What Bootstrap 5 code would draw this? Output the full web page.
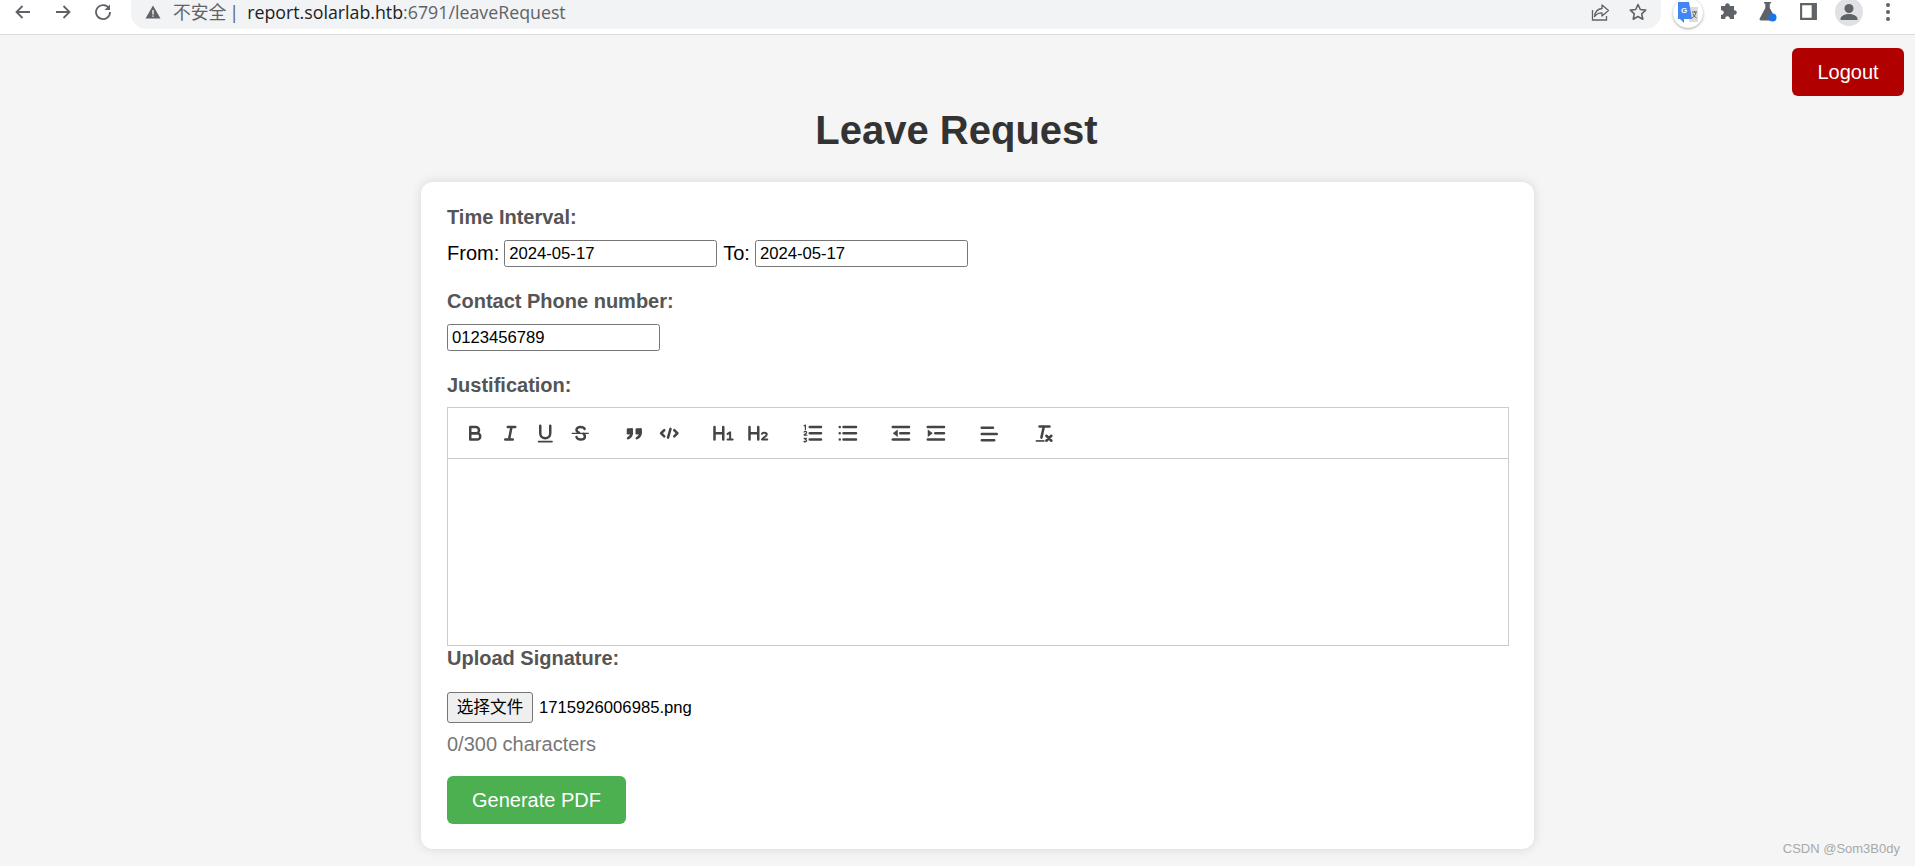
<!DOCTYPE html>
<html lang="en">
<head>
  <meta charset="UTF-8">
  <meta name="viewport" content="width=device-width, initial-scale=1.0">
  <title>Leave Request</title>
  <link href="https://cdn.jsdelivr.net/npm/bootstrap@5.3.0/dist/css/bootstrap.min.css" rel="stylesheet">
  <style>
    body {
      background: #f5f5f5;
      font-family: "Liberation Sans", "Noto Sans CJK SC", sans-serif;
      font-size: 20px;
      color: #000;
      height: 866px;
      overflow: hidden;
      position: relative;
    }
    .chrome-bar {
      height: 35px;
      background: #fff;
      border-bottom: 1px solid #dadce0;
      padding-left: 3px;
      overflow: hidden;
    }
    .chrome-btn {
      width: 40px;
      height: 23px;
      flex: none;
    }
    .btn-profile { width: 41px; }
    .btn-dots { width: 38px; }
    .omnibox {
      width: 1530px;
      height: 29px;
      margin-left: 8px;
      margin-right: 12px;
      background: #f1f3f4;
      border-radius: 0 0 15px 15px;
      padding: 0 13px 5px 14px;
      font-family: "Open Sans", "Noto Sans CJK SC", sans-serif;
      font-size: 17.8px;
      line-height: 24px;
      white-space: nowrap;
      flex: none;
    }
    .omni-warn { color: #5f6368; }
    .omni-sep { color: #5f6368; margin: 0 8px 0 3px; }
    .omni-host { color: #202124; }
    .omni-path { color: #5f6368; }
    .omni-end { margin-left: auto; gap: 18px; }
    .translate-chip {
      width: 30px;
      height: 30px;
      border-radius: 50%;
      background: #fff;
      box-shadow: 0 1px 3px rgba(0,0,0,.35);
      margin-top: -2px;
      margin-right: 5px;
      flex: none;
    }
    .tool-icon { flex: none; }
    .warn-icon { margin-right: 12px; }
    .logout-row {
      padding: 13px 11px 0 0;
    }
    .logout-btn {
      width: 112px;
      height: 48px;
      background: #b00000;
      color: #fff;
      font-size: 20px;
      border: 0;
      border-radius: 6px;
      padding: 0;
    }
    .page-title {
      font-family: "Liberation Sans", sans-serif;
      font-size: 40px;
      font-weight: 700;
      line-height: 46px;
      color: #333;
      margin: 11px 0 29px;
      padding-right: 2px;
    }
    .form-box {
      width: 1113px;
      height: 667px;
      margin-left: 421px;
      background: #fff;
      border-radius: 12px;
      box-shadow: 0 0 12px rgba(0,0,0,.12);
      padding: 23px 26px 25px;
    }
    .field-name {
      display: block;
      font-weight: 700;
      color: #555;
      line-height: 24px;
      margin-bottom: 0;
    }
    .field-row {
      height: 27px;
      line-height: 26px;
      margin: 11px 0 22px;
    }
    .plain-input {
      width: 213px;
      height: 27px;
      border: 1px solid #767676;
      border-radius: 2.5px;
      padding: 1px 4px;
      font-size: 16.67px;
      color: #000;
      vertical-align: top;
    }
    .to-label { margin: 0 5px 0 6px; }
    .from-label { margin-right: 5px; }
    .editor-wrap {
      margin-top: 10px;
      width: 1062px;
      height: 239px;
      border: 1px solid #ccc;
    }
    .editor-tools {
      height: 51px;
      padding: 10px;
      border-bottom: 1px solid #ccc;
    }
    .tool-group { margin-right: 18.75px; }
    .tool-btn {
      width: 35px;
      height: 30px;
      padding: 4px 6px;
      border: 0;
      background: none;
      line-height: 0;
    }
    .tool-btn svg {
      width: 22.5px;
      height: 22.5px;
    }
    .ql-line {
      fill: none;
      stroke: #444;
      stroke-width: 2;
      stroke-linecap: round;
      stroke-linejoin: round;
    }
    .ql-thin {
      fill: none;
      stroke: #444;
      stroke-width: 1.6;
      stroke-linecap: round;
      stroke-linejoin: round;
    }
    .ql-tiny {
      fill: none;
      stroke: #444;
      stroke-width: 1;
      stroke-linecap: round;
      stroke-linejoin: round;
    }
    .ql-fill { fill: #444; }
    .editor-text { height: 187px; }
    .file-row {
      margin-top: 22px;
      height: 31px;
      gap: 6px;
    }
    .file-btn {
      width: 86px;
      height: 31px;
      background: #efefef;
      border: 1px solid #767676;
      border-radius: 3px;
      font-size: 16.67px;
      padding: 0;
      color: #000;
    }
    .file-name { font-size: 16.67px; }
    .char-count {
      color: #777;
      line-height: 24px;
      margin-top: 9px;
    }
    .generate-btn {
      display: block;
      width: 179px;
      height: 48px;
      margin-top: 20px;
      background: #4caf50;
      color: #fff;
      font-size: 20px;
      border: 0;
      border-radius: 6px;
      padding: 0;
    }
    .mark-csdn {
      position: absolute;
      right: 15px;
      bottom: 9px;
      font-size: 13px;
      line-height: 16px;
      color: #a9a9a9;
    }
  </style>
</head>
<body>
  <div class="chrome-bar d-flex align-items-start">
    <div class="chrome-btn d-flex align-items-center justify-content-center">
      <svg width="20" height="20" viewBox="0 0 20 20"><path d="M17 10H4M9.5 4 3.5 10l6 6" fill="none" stroke="#5f6368" stroke-width="1.8"/></svg>
    </div>
    <div class="chrome-btn d-flex align-items-center justify-content-center">
      <svg width="20" height="20" viewBox="0 0 20 20"><path d="M3 10h13M10.5 4l6 6-6 6" fill="none" stroke="#5f6368" stroke-width="1.8"/></svg>
    </div>
    <div class="chrome-btn d-flex align-items-center justify-content-center">
      <svg width="20" height="20" viewBox="0 0 20 20"><path d="M16 6.5A7 7 0 1 0 17 10" fill="none" stroke="#5f6368" stroke-width="1.8"/><path d="M17 2.5V8h-5.5z" fill="#5f6368"/></svg>
    </div>
    <div class="omnibox d-flex align-items-center">
      <svg class="tool-icon warn-icon" width="16" height="16" viewBox="0 0 16 16"><path d="M8 1.5 15.500 14.500H.5z" fill="#5f6368"/><path d="M7.300 6h1.400v4.600H7.300zM7.300 11.400h1.400v1.400H7.300z" fill="#f1f3f4"/></svg>
      <span class="omni-warn">不安全</span><span class="omni-sep">|</span><span class="omni-host">report.solarlab.htb</span><span class="omni-path">:6791/leaveRequest</span>
      <div class="omni-end d-flex align-items-center">
        <svg class="tool-icon" width="20" height="20" viewBox="0 0 20 20"><path d="M2.500 8v10h14v-4" fill="none" stroke="#5f6368" stroke-width="1.300"/><path d="M12 3l6.500 5.500L12 14v-3.200c-3.500 0-5.500 1-7.500 3.700.5-4.500 3-7.500 7.500-8z" fill="none" stroke="#5f6368" stroke-width="1.300" stroke-linejoin="round"/></svg>
        <svg class="tool-icon" width="20" height="20" viewBox="0 0 20 20"><path d="M10 2.500l2.300 5 5.400.6-4 3.700 1.100 5.400-4.800-2.700-4.800 2.700 1.100-5.400-4-3.700 5.400-.6z" fill="none" stroke="#5f6368" stroke-width="1.600" stroke-linejoin="round"/></svg>
      </div>
    </div>
    <div class="translate-chip d-flex align-items-center justify-content-center">
      <svg width="22" height="22" viewBox="0 0 22 22"><path d="M13 5h8v15h-9z" fill="#dadce0"/><path d="M15 10h5M17.500 9v1.500M19 10c-.5 3-2 5-4 6M16 11.500c.6 2 1.800 3.500 3.500 4.500" fill="none" stroke="#5f6368" stroke-width="1"/><path d="M1 0h11l3 17H7v4l-4-4H1z" fill="#4285f4"/><text x="4" y="11" font-size="8" font-weight="700" fill="#fff" font-family="Liberation Sans, sans-serif">G</text></svg>
    </div>
    <div class="chrome-btn d-flex align-items-center justify-content-center">
      <svg width="20" height="20" viewBox="0 0 20 20"><path d="M2 6h4.200a2.300 2.300 0 1 1 4.500 0H15v4.300a2.300 2.300 0 1 1 0 4.500V19h-4.300a2.300 2.300 0 1 0-4.500 0H2v-4.200a2.300 2.300 0 1 0 0-4.500z" fill="#5f6368" transform="translate(1 -2)"/></svg>
    </div>
    <div class="chrome-btn d-flex align-items-center justify-content-center">
      <svg width="22" height="22" viewBox="0 0 22 22"><path d="M7 1h7v1.500h-1.200v4.500l5.700 10.500c.5 1-.2 2-1.300 2H4c-1.100 0-1.800-1-1.300-2L8.300 7V2.500H7z" fill="#5f6368"/><circle cx="15.500" cy="16.500" r="4" fill="#1a73e8"/></svg>
    </div>
    <div class="chrome-btn d-flex align-items-center justify-content-center">
      <svg width="19" height="19" viewBox="0 0 18 18"><path d="M1 1h16v16H1zM3 3v12h9V3z" fill="#5f6368" fill-rule="evenodd"/></svg>
    </div>
    <div class="chrome-btn btn-profile d-flex align-items-center justify-content-center">
      <svg class="tool-icon" width="28" height="28" viewBox="0 0 28 28"><circle cx="14" cy="14" r="14" fill="#dfe1e5"/><circle cx="14" cy="10.500" r="4.500" fill="#5f6368"/><path d="M5.500 21c0-3.500 5-5 8.500-5s8.500 1.500 8.500 5v1h-17z" fill="#5f6368"/></svg>
    </div>
    <div class="chrome-btn btn-dots d-flex align-items-center justify-content-center">
      <svg width="6" height="20" viewBox="0 0 6 20"><circle cx="3" cy="3" r="2" fill="#5f6368"/><circle cx="3" cy="10" r="2" fill="#5f6368"/><circle cx="3" cy="17" r="2" fill="#5f6368"/></svg>
    </div>
  </div>

  <div class="logout-row d-flex justify-content-end">
    <button type="button" class="logout-btn">Logout</button>
  </div>

  <h1 class="page-title text-center">Leave Request</h1>

  <form class="form-box">
    <label class="field-name">Time Interval:</label>
    <div class="field-row">
      <span class="from-label">From:</span><input class="plain-input" type="text" value="2024-05-17"><span class="to-label">To:</span><input class="plain-input" type="text" value="2024-05-17">
    </div>

    <label class="field-name">Contact Phone number:</label>
    <div class="field-row">
      <input class="plain-input" type="text" value="0123456789">
    </div>

    <label class="field-name">Justification:</label>
    <div class="editor-wrap">
      <div class="editor-tools d-flex">
        <div class="tool-group d-flex">
          <button type="button" class="tool-btn"><svg viewBox="0 0 18 18"><path class="ql-line" d="M5 4h4.500a2.500 2.500 0 0 1 0 5H5z"/><path class="ql-line" d="M5 9h5.500a2.500 2.500 0 0 1 0 5H5z"/></svg></button>
          <button type="button" class="tool-btn"><svg viewBox="0 0 18 18"><path class="ql-line" d="M7 4h6M5 14h6M8 14l2-10"/></svg></button>
          <button type="button" class="tool-btn"><svg viewBox="0 0 18 18"><path class="ql-line" d="M5 3v6a4 4 0 0 0 8 0V3"/><rect class="ql-fill" x="3" y="15" width="12" height="1.300" rx=".5"/></svg></button>
          <button type="button" class="tool-btn"><svg viewBox="0 0 18 18"><path class="ql-line" d="M12.500 5.500C12 4.500 10.800 4 9.300 4 7.400 4 6 4.800 6 6.200c0 1 .6 1.800 2 2.300M6 12c.4 1.300 1.700 2 3.300 2 2 0 3.400-.9 3.400-2.500 0-.8-.3-1.500-1-2"/><path class="ql-fill" d="M2.500 8.500h13a.5.500 0 0 1 0 1h-13a.5.500 0 0 1 0-1z"/></svg></button>
        </div>
        <div class="tool-group d-flex">
          <button type="button" class="tool-btn"><svg viewBox="0 0 18 18"><rect class="ql-fill" x="3" y="5" width="5" height="5" rx="1"/><rect class="ql-fill" x="10" y="5" width="5" height="5" rx="1"/><path class="ql-line" d="M7 6v3c0 2-1 3-3 4M14 6v3c0 2-1 3-3 4"/></svg></button>
          <button type="button" class="tool-btn"><svg viewBox="0 0 18 18"><path class="ql-line" d="M5 6.500 2.500 9 5 11.500M13 6.500 15.500 9 13 11.500M10 5.500 8 12.500"/></svg></button>
        </div>
        <div class="tool-group d-flex">
          <button type="button" class="tool-btn"><svg viewBox="0 0 18 18"><path class="ql-line" d="M2 4v10M9 4v10M2 9h7"/><path class="ql-thin" d="M12.500 9.500l2-1.300V14M12.500 14h4"/></svg></button>
          <button type="button" class="tool-btn"><svg viewBox="0 0 18 18"><path class="ql-line" d="M2 4v10M9 4v10M2 9h7"/><path class="ql-thin" d="M12 9.500c.3-1.200 3.800-1.300 3.800.4 0 1.500-3.600 2.800-3.800 4.100h4.200"/></svg></button>
        </div>
        <div class="tool-group d-flex">
          <button type="button" class="tool-btn"><svg viewBox="0 0 18 18"><path class="ql-line" d="M7 4h9M7 9h9M7 14h9"/><path class="ql-tiny" d="M2.500 3l1-.5V6M2.500 8c.5-.8 2-.6 2 .4 0 .8-1.800 1.500-2 2.100h2.200M2.500 13h1.800l-1 1c1 0 1.200 .5 1.200 1s-1 1.300-2.100 .5"/></svg></button>
          <button type="button" class="tool-btn"><svg viewBox="0 0 18 18"><path class="ql-line" d="M6 4h10M6 9h10M6 14h10M3 4h0M3 9h0M3 14h0"/></svg></button>
        </div>
        <div class="tool-group d-flex">
          <button type="button" class="tool-btn"><svg viewBox="0 0 18 18"><path class="ql-line" d="M3 4h13M9 9h7M3 14h13"/><path class="ql-fill" d="M7 6v6L3 9z"/></svg></button>
          <button type="button" class="tool-btn"><svg viewBox="0 0 18 18"><path class="ql-line" d="M3 4h13M9 9h7M3 14h13"/><path class="ql-fill" d="M3 6v6l4-3z"/></svg></button>
        </div>
        <div class="tool-group d-flex">
          <button type="button" class="tool-btn"><svg viewBox="0 0 18 18"><path class="ql-line" d="M3 4.500h9M3 9.500h12M3 14.500h10"/></svg></button>
        </div>
        <div class="tool-group d-flex">
          <button type="button" class="tool-btn"><svg viewBox="0 0 18 18"><path class="ql-line" d="M6 3.500h8M9.500 3.500 7.500 12.500"/><rect class="ql-fill" x="3" y="14.500" width="7" height="1.300"/><path class="ql-line" d="M11.500 11l4 4M15.500 11l-4 4"/></svg></button>
        </div>
      </div>
      <div class="editor-text"></div>
    </div>

    <label class="field-name">Upload Signature:</label>
    <div class="file-row d-flex align-items-center">
      <button type="button" class="file-btn">选择文件</button>
      <span class="file-name">1715926006985.png</span>
    </div>
    <div class="char-count">0/300 characters</div>
    <button type="button" class="generate-btn">Generate PDF</button>
  </form>

  <div class="mark-csdn">CSDN @Som3B0dy</div>

  <script src="https://cdn.jsdelivr.net/npm/bootstrap@5.3.0/dist/js/bootstrap.bundle.min.js"></script>
</body>
</html>
